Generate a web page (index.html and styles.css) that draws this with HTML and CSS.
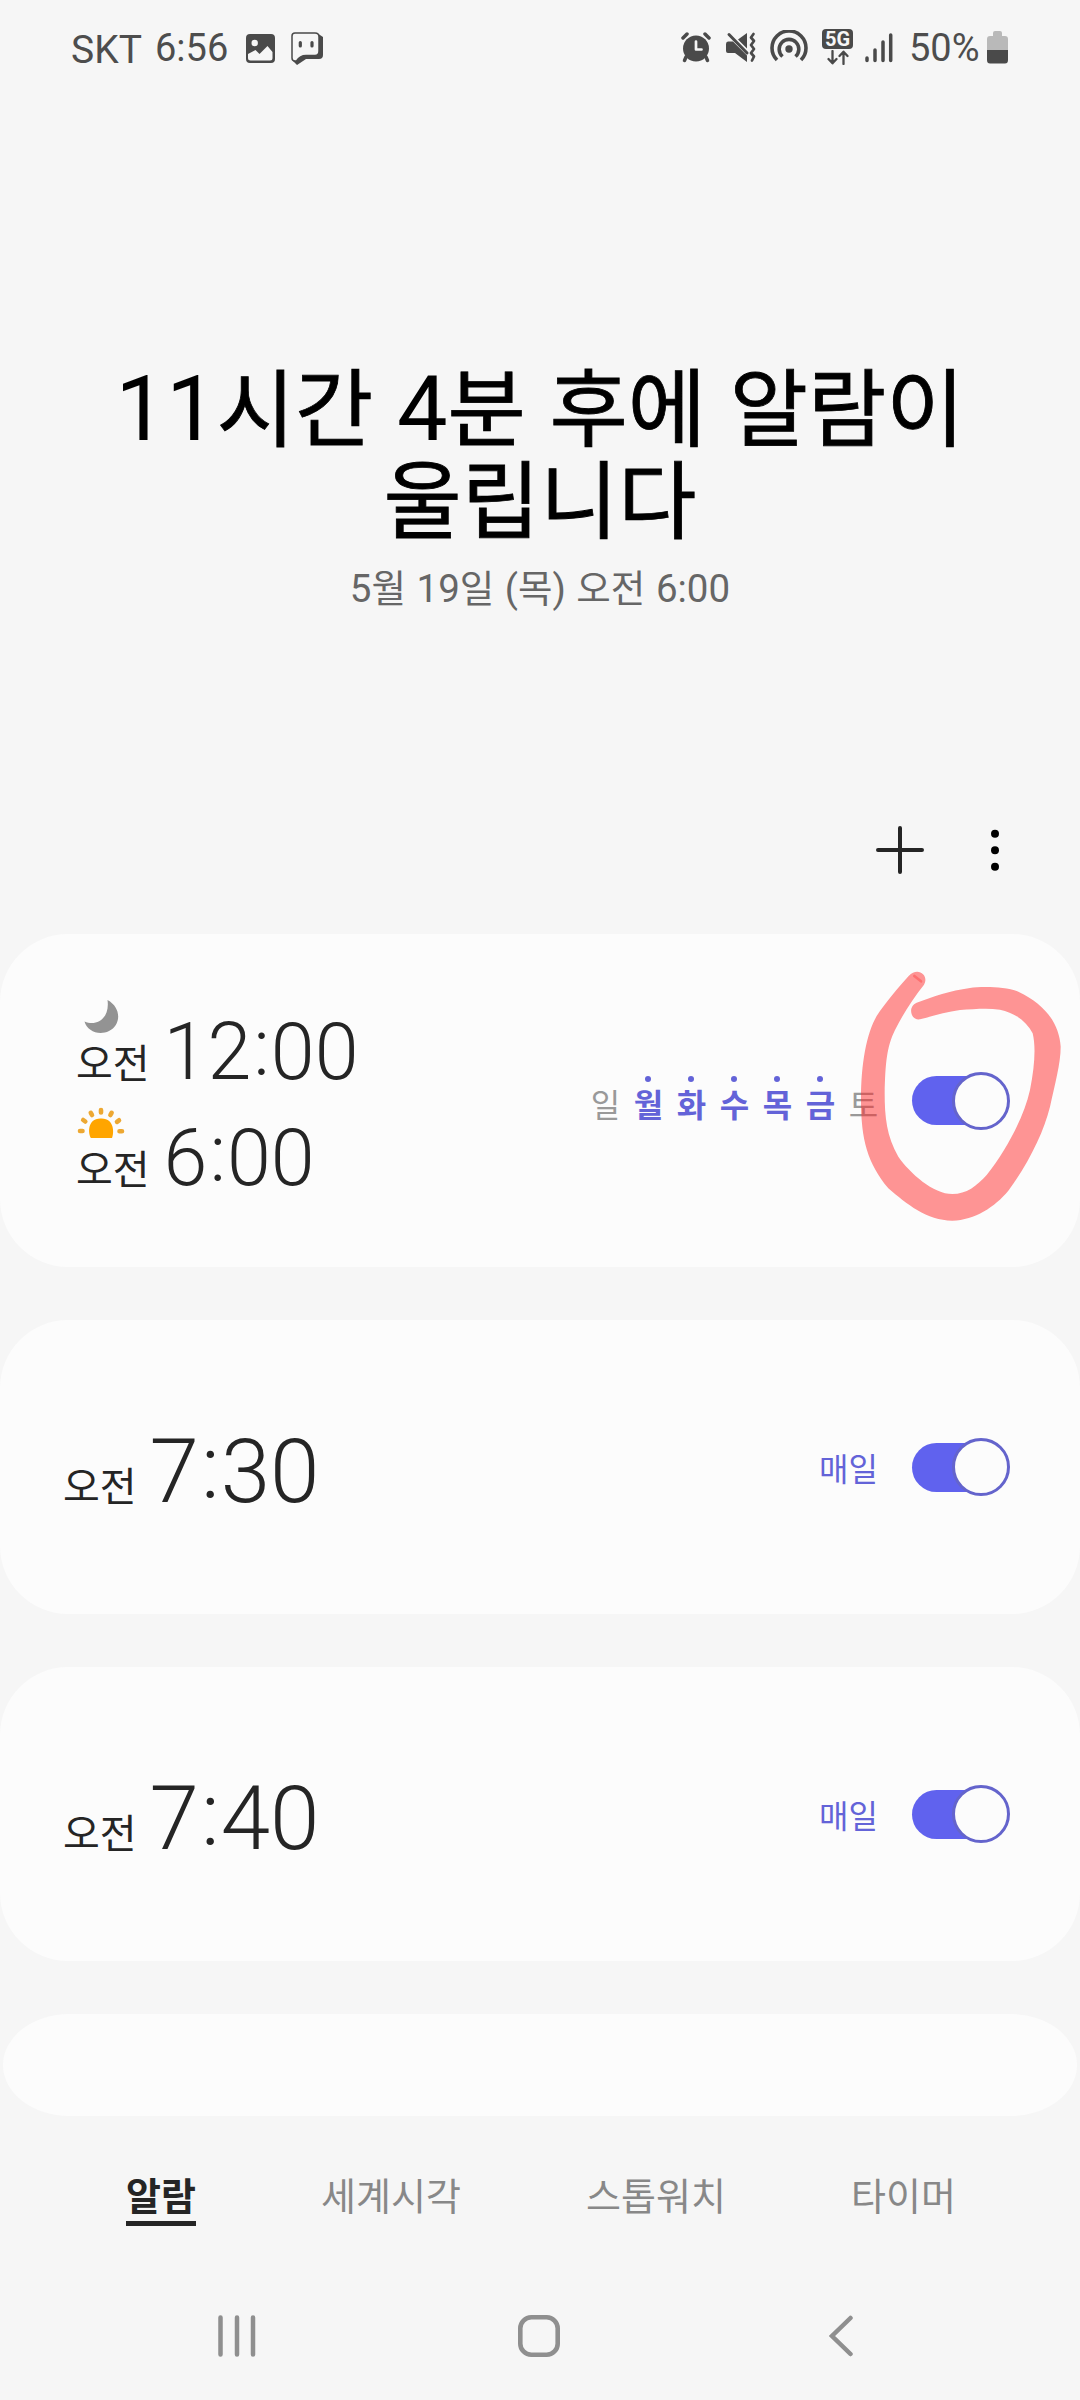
FILE: index.html
```html
<!DOCTYPE html>
<html lang="ko">
<head>
<meta charset="utf-8">
<title>알람</title>
<link rel="stylesheet" href="styles.css">
</head>
<body>
<div class="phone">
  <header class="status">
    <span class="carrier">SKT</span>
    <span class="clock">6:56</span>
    <svg class="ic-photo" width="30" height="30" viewBox="0 0 30 30"><path fill="#4a4a4a" fill-rule="evenodd" d="M4 0H25Q29 0 29 4V25Q29 29 25 29H4Q0 29 0 25V4Q0 0 4 0ZM2 20V24Q2 26.500 4.500 26.500H24Q26.500 26.500 26.500 24V18L21.500 12L13.500 20L9.500 16ZM8.700 5.800A3.200 3.200 0 1 0 8.700 12.200A3.200 3.200 0 1 0 8.700 5.800Z"/></svg>
    <svg class="ic-chat" width="33" height="34" viewBox="0 0 33 34"><path fill="#4a4a4a" d="M26 1L32 5V23Q32 27 28 27H15L6 33L2 29L9 23H24L28 20Z"/><path d="M4 1H24Q28 1 28 5V19Q28 23.500 24 23.500H15Q9 23.500 5.500 29H4Q1 29 1 26V4Q1 1 4 1Z" fill="#f6f6f6" stroke="#4a4a4a" stroke-width="1.500"/><path d="M9.300 10.500V14M21 10.500V14" stroke="#4a4a4a" stroke-width="3.200" stroke-linecap="round"/></svg>
    <span class="spacer"></span>
    <svg class="ic-alarm" width="30" height="31" viewBox="0 0 30 31"><circle cx="15" cy="16.500" r="13" fill="#4a4a4a"/><path d="M2 6L6 2M28 6L24 2" stroke="#4a4a4a" stroke-width="3.500" stroke-linecap="round"/><path d="M5 25L3.500 28.500M25 25L26.500 28.500" stroke="#4a4a4a" stroke-width="3.500" stroke-linecap="round"/><path d="M15 9.500V17.500H20.500" fill="none" stroke="#f6f6f6" stroke-width="2.700" stroke-linecap="round" stroke-linejoin="round"/></svg>
    <svg class="ic-mute" width="30" height="31" viewBox="0 0 30 31"><path fill="#4a4a4a" d="M0 12Q0 9.500 2 9.500H7L21 23.500V30L9 21H2Q0 21 0 19ZM12 7.500L21 1V16.500Z"/><path d="M3 2.500L21 21" stroke="#4a4a4a" stroke-width="3" stroke-linecap="round"/><path d="M27.500 2L25 5.500L28 9L25 13L28 17L25 21L28 24.500L26 28.500" fill="none" stroke="#4a4a4a" stroke-width="2.700" stroke-linecap="round" stroke-linejoin="round"/></svg>
    <svg class="ic-hotspot" width="38" height="32" viewBox="0 0 38 32"><circle cx="19" cy="19" r="3.700" fill="#4a4a4a"/><path d="M7 30A17 17 0 1 1 31 30M12.500 26.500A9.800 9.800 0 1 1 25.500 26.500" fill="none" stroke="#4a4a4a" stroke-width="3.600"/></svg>
    <div class="net">
      <span class="net-label">5G</span>
      <svg width="22" height="15" viewBox="0 0 22 15"><path d="M5.500 1V13M1.500 9L5.500 13.300L9.500 9M16.500 14V2M12.500 6L16.500 1.700L20.500 6" fill="none" stroke="#4a4a4a" stroke-width="2.300" stroke-linecap="round" stroke-linejoin="round"/></svg>
    </div>
    <svg class="ic-signal" width="28" height="30" viewBox="0 0 28 30"><path d="M2 25V27.500M10 17V27.500M18 9V27.500M25.700 2V27.500" stroke="#4a4a4a" stroke-width="3.500" stroke-linecap="round"/></svg>
    <span class="percent">50%</span>
    <svg class="ic-battery" width="21" height="33" viewBox="0 0 21 33"><path fill="#b9b9b9" d="M6 2Q6 0 8 0H13Q15 0 15 2V5H18Q21 5 21 8V19H0V8Q0 5 3 5H6Z"/><path fill="#4a4a4a" d="M0 19H21V29Q21 32.500 18 32.500H3Q0 32.500 0 29Z"/></svg>
  </header>

  <section class="hero">
    <h1><span class="num">11</span>시간 <span class="num">4</span>분 후에 알람이<br>울립니다</h1>
    <p><span class="num">5</span>월 <span class="num">19</span>일 <span class="num">(</span>목<span class="num">)</span> 오전 <span class="num">6:00</span></p>
  </section>

  <div class="toolbar">
    <svg width="50" height="50" viewBox="0 0 50 50"><path d="M25 3V47M3 25H47" stroke="#252525" stroke-width="4" stroke-linecap="round"/></svg>
    <svg width="10" height="44" viewBox="0 0 10 44"><circle cx="5" cy="5.800" r="4"/><circle cx="5" cy="22.200" r="4"/><circle cx="5" cy="38.700" r="4"/></svg>
  </div>

  <main class="list">
    <article class="card card-bedtime">
      <div class="entries">
        <div class="entry">
          <svg width="50" height="34" viewBox="0 0 50 34"><path fill="#939393" d="M31.500 0C46 8 45 25 33 31C23 36 11 31 8.500 21.500C22 27 34 17 31.500 0Z"/></svg>
          <div class="time"><span class="ampm">오전</span><span class="digits">12<span class="colon">:</span>00</span></div>
        </div>
        <div class="entry">
          <svg width="50" height="34" viewBox="0 0 50 34"><path fill="#ffa500" d="M15 32C12 28 11 12 25 12.500C39 12 38 28 36 32Z"/><path d="M4 25H6.500M7.200 14L9.300 15.500M14.800 6.800L16 9M25 4V6.500M35.600 6.800L34.400 9M43 14.300L41 15.800M43.500 25.300H46" stroke="#eda832" stroke-width="4.600" stroke-linecap="round"/></svg>
          <div class="time"><span class="ampm">오전</span><span class="digits">6<span class="colon">:</span>00</span></div>
        </div>
      </div>
      <div class="days">
        <span>일</span><span class="on">월</span><span class="on">화</span><span class="on">수</span><span class="on">목</span><span class="on">금</span><span>토</span>
      </div>
      <div class="toggle"><i></i></div>
      <svg class="scribble" width="210" height="260" viewBox="855 45 630 780"><path fill="#ff2c2c" fill-opacity=".5" d="M1016 78C985 112 945 160 920 198C890 250 873 340 873 450C873 570 893 640 955 715C1010 762 1070 812 1147 812C1215 810 1275 770 1315 722C1375 640 1420 550 1440 470C1455 400 1472 340 1472 290C1468 225 1430 165 1345 125C1300 108 1230 110 1200 114C1140 122 1090 140 1040 158C1012 170 1022 212 1050 208C1095 196 1130 185 1170 180C1210 178 1250 174 1290 179C1335 188 1370 215 1388 250C1398 290 1394 350 1380 420C1362 500 1310 600 1250 675C1220 708 1190 732 1147 732C1090 732 1020 670 985 620C950 560 944 500 944 430C946 340 950 290 975 240C1000 190 1030 145 1062 104C1078 78 1045 48 1016 78Z"/><path d="M1033 78L1053 94" stroke="#ff2c2c" stroke-opacity=".35" stroke-width="8" stroke-linecap="round"/></svg>
    </article>
    <article class="card">
      <div class="time time-big"><span class="ampm">오전</span><span class="digits">7<span class="colon">:</span>30</span></div>
      <span class="repeat">매일</span>
      <div class="toggle"><i></i></div>
    </article>
    <article class="card">
      <div class="time time-big"><span class="ampm">오전</span><span class="digits">7<span class="colon">:</span>40</span></div>
      <span class="repeat">매일</span>
      <div class="toggle"><i></i></div>
    </article>
    <article class="card card-partial"></article>
  </main>

  <nav class="tabs">
    <span class="active">알람</span><span>세계시각</span><span>스톱워치</span><span>타이머</span>
  </nav>

  <footer class="navbar">
    <svg width="38" height="42" viewBox="0 0 38 42"><path d="M2.500 2.500V39.500M19 2.500V39.500M35 2.500V39.500" stroke="#8f8f8f" stroke-width="4.500" stroke-linecap="round"/></svg>
    <svg class="home" width="42" height="42" viewBox="0 0 42 42"><rect x="2.300" y="2.300" width="37.400" height="37.400" rx="11" fill="none" stroke="#8f8f8f" stroke-width="4.600"/></svg>
    <svg width="24" height="42" viewBox="0 0 24 42"><path d="M21.500 3L3 21L21.500 39" fill="none" stroke="#8f8f8f" stroke-width="4.500" stroke-linecap="round"/></svg>
  </footer>
</div>
</body>
</html>
```

FILE: styles.css
```css
* { box-sizing: border-box; }
body {
  margin: 0;
  background: #f6f6f6;
  font-family: "Noto Sans CJK KR", sans-serif;
  color: #252525;
}
svg { display: block; flex: none; }
.phone { width: 1080px; height: 2400px; overflow: hidden; display: flex; flex-direction: column; }
.num, .digits, .carrier, .clock, .percent, .net-label { font-family: Roboto, sans-serif; }

.status {
  height: 95px;
  padding: 0 72px 0 71px;
  display: flex;
  align-items: flex-start;
  color: #4d4d4d;
  font-size: 38px;
  line-height: 40px;
}
.carrier { margin-top: 30px; font-size: 39px; width: 84px; }
.clock { margin-top: 28px; width: 91px; }
.percent { margin-top: 28px; width: 78px; }
.spacer { flex: 1; }
.ic-photo { margin-top: 34px; }
.ic-chat { margin: 32px 0 0 15px; }
.ic-alarm { margin: 32px 15px 0 0; }
.ic-mute { margin: 32px 14px 0 0; }
.ic-hotspot { margin: 30px 14px 0 0; }
.ic-signal { margin: 33px 16px 0 0; }
.ic-battery { margin: 31px 0 0; }
.net { margin: 29px 12px 0 0; display: flex; flex-direction: column; align-items: center; gap: 1px; }
.net-label {
  width: 31px;
  height: 20px;
  border-radius: 4px;
  background: #4a4a4a;
  color: #f6f6f6;
  font-size: 20px;
  font-weight: 700;
  line-height: 21px;
  text-align: center;
}

.hero { height: 705px; padding-top: 262px; text-align: center; }
.hero h1 { margin: 0; font-size: 85px; font-weight: 400; line-height: 92px; color: #000; -webkit-text-stroke: 0.8px #000; }
.hero h1 .num { font-size: 90px; line-height: 0; -webkit-text-stroke: 0; }
.hero p { margin: 20px 0 0; font-size: 37.500px; line-height: 50px; color: #666; }
.hero p .num { font-size: 38.500px; line-height: 0; }

.toolbar {
  height: 134px;
  padding: 25px 80px 0 0;
  display: flex;
  justify-content: flex-end;
  gap: 65px;
}
.toolbar svg + svg { margin-top: 3px; }

.list { display: flex; flex-direction: column; gap: 53px; }
.card {
  position: relative;
  height: 294px;
  padding: 0 70px 0 63px;
  border-radius: 68px;
  background: #fcfcfc;
  display: flex;
  align-items: center;
}
.card-bedtime { height: 333px; padding-left: 76px; }
.card-partial { height: 102px; border-radius: 66px / 51px; margin: 0 3px; }

.entries { align-self: flex-start; padding-top: 66px; margin-right: auto; }
.entry { height: 106px; }
.time { display: flex; align-items: baseline; margin-right: auto; line-height: 36px; white-space: nowrap; }
.ampm { font-size: 40px; transform: translateY(-1px); }
.digits { font-size: 79px; font-weight: 300; margin-left: 14px; }
.colon { display: inline-block; transform: translateY(-4px); padding: 0 1px 0 2px; }
.time-big .digits { font-size: 89px; margin-left: 13px; }
.time-big { padding-top: 23px; }

.days { display: flex; margin-right: 27px; }
.days span {
  position: relative;
  width: 43px;
  text-align: center;
  font-size: 32px;
  line-height: 40px;
  color: #999;
  padding-top: 4px;
}
.days .on { color: #6363d8; font-weight: 700; }
.days .on::before {
  content: "";
  position: absolute;
  top: -3px;
  left: 18px;
  width: 6px;
  height: 6px;
  border-radius: 50%;
  background: #6363d8;
}
.repeat { margin-right: 34px; font-size: 32px; line-height: 40px; color: #6363d8; }

.toggle {
  width: 98px;
  height: 49px;
  border-radius: 25px;
  background: linear-gradient(90deg, #6062ee 70px, transparent 70px);
  display: flex;
  align-items: center;
  justify-content: flex-end;
}
.toggle i {
  flex: none;
  width: 58px;
  height: 58px;
  border: 3px solid #6464cc;
  border-radius: 50%;
  background: #fcfcfc;
}
.scribble { position: absolute; left: 855px; top: 31px; }

.tabs {
  height: 155px;
  padding: 52px 124px 0 126px;
  display: flex;
  justify-content: space-between;
  align-items: flex-start;
  font-size: 38px;
  line-height: 52px;
  color: #888;
}
.tabs .active { color: #252525; font-weight: 700; border-bottom: 5px solid #252525; padding-bottom: 1px; }

.navbar {
  height: 129px;
  padding: 44px 227px 0 218px;
  display: flex;
  justify-content: space-between;
}
.navbar .home { margin-right: 8px; }
```
